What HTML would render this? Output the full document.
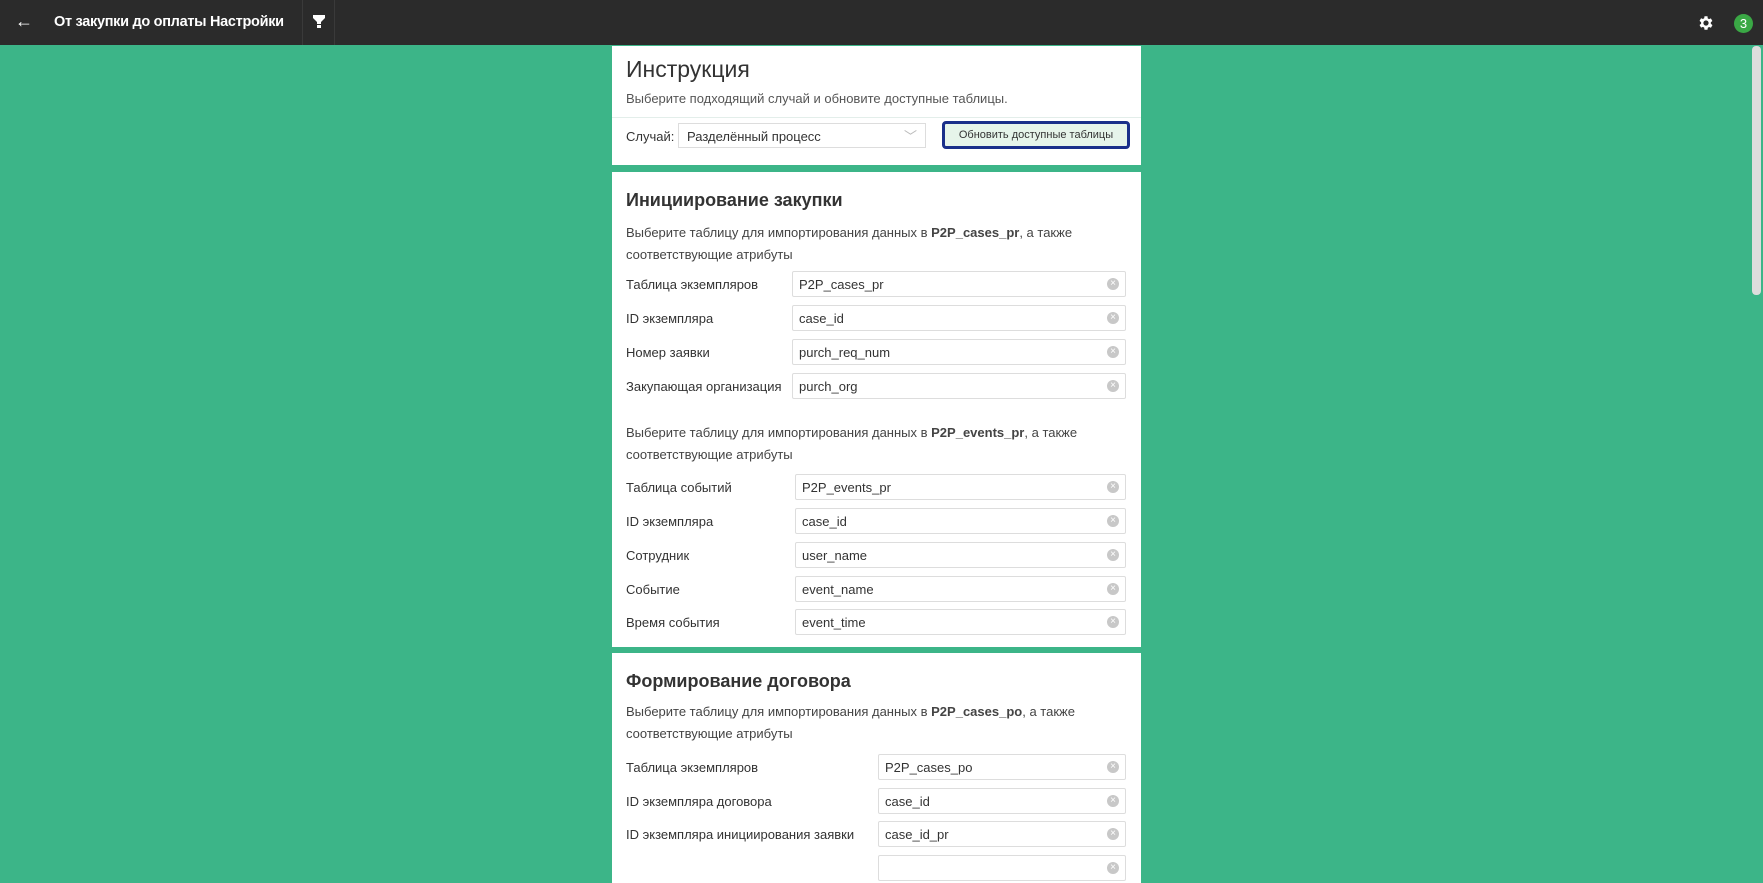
<!DOCTYPE html><html><head><meta charset="utf-8"><style>
*{box-sizing:border-box;margin:0;padding:0}
body{width:1763px;height:863px;overflow:hidden;background:#3cb588;font-family:"Liberation Sans",sans-serif;color:#333;position:relative}
.hdr{position:absolute;left:0;top:0;width:1763px;height:45px;background:#2b2b2b;color:#fff}
.card{position:absolute;left:612px;width:529px;background:#fff}
.t{position:absolute;white-space:nowrap}
.lbl{position:absolute;left:14px;font-size:13px;color:#333;white-space:nowrap}
.inp{position:absolute;right:15px;height:26px;border:1px solid #ddd;border-radius:2px;font-size:13px;padding:5px 6px;color:#333}
.inp i{position:absolute;right:6px;top:6px;width:12px;height:12px;border-radius:50%;background:#c8c8c8;color:#fff;font-size:10px;line-height:12px;text-align:center;font-style:normal}
p.d{position:absolute;left:14px;font-size:13px;line-height:22px;color:#444}
h2{position:absolute;left:14px;font-size:18px;font-weight:bold;color:#333}
</style></head><body>
<div class="hdr">
<div class="t" style="left:15px;top:11px;font-size:18px">←</div>
<div class="t" style="left:54px;top:14px;font-size:14.5px;font-weight:bold;letter-spacing:-0.3px">От закупки до оплаты Настройки</div>
<div style="position:absolute;left:302px;top:0;width:1px;height:45px;background:#3a3a3a"></div>
<div style="position:absolute;left:334px;top:0;width:1px;height:45px;background:#3a3a3a"></div>
<svg style="position:absolute;left:313px;top:15px" width="12" height="14" viewBox="0 0 12 14"><path d="M0 0H12V3L8 7V9H4V7L0 3Z M4 10H8V13H4Z" fill="#fff"/></svg>
<svg style="position:absolute;left:1697px;top:14px" width="18" height="18" viewBox="0 0 24 24"><path fill="#fff" d="M19.4 13a7.5 7.5 0 000-2l2.1-1.6-2-3.5-2.5 1a7 7 0 00-1.7-1L15 3h-4l-.4 2.7a7 7 0 00-1.7 1l-2.5-1-2 3.5L6.5 11a7.5 7.5 0 000 2l-2.1 1.6 2 3.5 2.5-1a7 7 0 001.7 1L11 21h4l.4-2.7a7 7 0 001.7-1l2.5 1 2-3.5zM13 15.5a3.5 3.5 0 110-7 3.5 3.5 0 010 7z" transform="translate(-1 0)"/></svg>
<div style="position:absolute;left:1734px;top:14px;width:19px;height:19px;border-radius:50%;background:#3aa845;color:#fff;font-size:13px;text-align:center;line-height:19px">3</div>
</div>
<div style="position:absolute;left:1752px;top:46px;width:9px;height:249px;background:#ddd;border-radius:4px"></div>

<div class="card" style="top:46px;height:119px">
<div class="t" style="left:14px;top:10px;font-size:23px;color:#333">Инструкция</div>
<div class="t" style="left:14px;top:45px;font-size:13px;color:#555">Выберите подходящий случай и обновите доступные таблицы.</div>
<div style="position:absolute;left:0;top:71px;width:529px;height:1px;background:#e3eeea"></div>
<div class="t" style="left:14px;top:83px;font-size:13px">Случай:</div>
<div style="position:absolute;left:66px;top:77px;width:248px;height:25px;border:1px solid #ddd;font-size:13px;padding:5px 8px">Разделённый процесс<span style="position:absolute;right:8px;top:2px;color:#bbb">﹀</span></div>
<div style="position:absolute;left:330px;top:75px;width:188px;height:28px;border:3px solid #1a2f8a;border-radius:4px;background:#e6f4ea;font-size:11px;text-align:center;line-height:22px;color:#333">Обновить доступные таблицы</div>
</div>

<div class="card" style="top:172px;height:475px">
<h2 style="top:18px">Инициирование закупки</h2>
<p class="d" style="top:50px">Выберите таблицу для импортирования данных в <b>P2P_cases_pr</b>, а также<br>соответствующие атрибуты</p>
<div class="lbl" style="top:105px">Таблица экземпляров</div><div class="inp" style="left:180px;top:99px">P2P_cases_pr<i>×</i></div>
<div class="lbl" style="top:139px">ID экземпляра</div><div class="inp" style="left:180px;top:133px">case_id<i>×</i></div>
<div class="lbl" style="top:173px">Номер заявки</div><div class="inp" style="left:180px;top:167px">purch_req_num<i>×</i></div>
<div class="lbl" style="top:207px">Закупающая организация</div><div class="inp" style="left:180px;top:201px">purch_org<i>×</i></div>
<p class="d" style="top:250px">Выберите таблицу для импортирования данных в <b>P2P_events_pr</b>, а также<br>соответствующие атрибуты</p>
<div class="lbl" style="top:308px">Таблица событий</div><div class="inp" style="left:183px;top:302px">P2P_events_pr<i>×</i></div>
<div class="lbl" style="top:342px">ID экземпляра</div><div class="inp" style="left:183px;top:336px">case_id<i>×</i></div>
<div class="lbl" style="top:376px">Сотрудник</div><div class="inp" style="left:183px;top:370px">user_name<i>×</i></div>
<div class="lbl" style="top:410px">Событие</div><div class="inp" style="left:183px;top:404px">event_name<i>×</i></div>
<div class="lbl" style="top:443px">Время события</div><div class="inp" style="left:183px;top:437px">event_time<i>×</i></div>
</div>

<div class="card" style="top:653px;height:230px">
<h2 style="top:18px">Формирование договора</h2>
<p class="d" style="top:48px">Выберите таблицу для импортирования данных в <b>P2P_cases_po</b>, а также<br>соответствующие атрибуты</p>
<div class="lbl" style="top:107px">Таблица экземпляров</div><div class="inp" style="left:266px;top:101px">P2P_cases_po<i>×</i></div>
<div class="lbl" style="top:141px">ID экземпляра договора</div><div class="inp" style="left:266px;top:135px">case_id<i>×</i></div>
<div class="lbl" style="top:174px">ID экземпляра инициирования заявки</div><div class="inp" style="left:266px;top:168px">case_id_pr<i>×</i></div>
<div class="inp" style="left:266px;top:202px"><i>×</i></div>
</div>
</body></html>
